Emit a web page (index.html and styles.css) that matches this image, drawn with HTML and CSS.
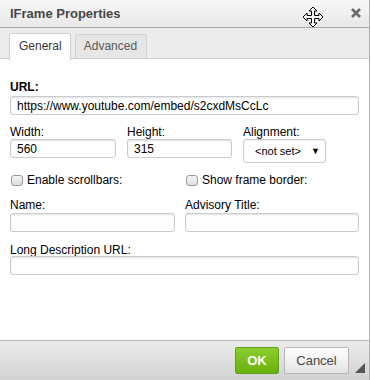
FILE: index.html
```html
<!DOCTYPE html>
<html>
<head>
<meta charset="utf-8">
<link rel="stylesheet" href="styles.css">
</head>
<body>
<div class="dialog">
  <div class="titlebar">
    <span class="title">IFrame Properties</span>
    <svg class="move" width="22" height="22" viewBox="0 0 22 22">
      <path d="M11 1 L15 5 L12.5 5 L12.5 9.5 L17 9.5 L17 7 L21 11 L17 15 L17 12.5 L12.5 12.5 L12.5 17 L15 17 L11 21 L7 17 L9.5 17 L9.5 12.5 L5 12.5 L5 15 L1 11 L5 7 L5 9.5 L9.5 9.5 L9.5 5 L7 5 Z" fill="#fff" stroke="#000" stroke-width="1" stroke-linejoin="miter"/>
    </svg>
    <svg class="close" width="10" height="10" viewBox="0 0 10 10">
      <path d="M1 1 L9 9 M9 1 L1 9" stroke="#6b6b6b" stroke-width="2.6"/>
    </svg>
  </div>
  <div class="tabs">
    <div class="tab active">General</div>
    <div class="tab">Advanced</div>
  </div>
  <div class="content">
    <div class="field">
      <label class="lbl bold">URL:</label>
      <input class="inp url" type="text" value="https://www.youtube.com/embed/s2cxdMsCcLc">
    </div>
    <div class="row3">
      <div class="field">
        <label class="lbl">Width:</label>
        <input class="inp" type="text" value="560">
      </div>
      <div class="field">
        <label class="lbl">Height:</label>
        <input class="inp" type="text" value="315">
      </div>
      <div class="field">
        <label class="lbl">Alignment:</label>
        <div class="select"><span>&lt;not set&gt;</span><span class="arrow">&#9660;</span></div>
      </div>
    </div>
    <div class="row2 checks">
      <label class="chk"><span class="box"></span>Enable scrollbars:</label>
      <label class="chk"><span class="box"></span>Show frame border:</label>
    </div>
    <div class="row2 names">
      <div class="field">
        <label class="lbl">Name:</label>
        <input class="inp gap1" type="text">
      </div>
      <div class="field">
        <label class="lbl">Advisory Title:</label>
        <input class="inp gap1" type="text">
      </div>
    </div>
    <div class="field longdesc">
      <label class="lbl">Long Description URL:</label>
      <input class="inp tight" type="text">
    </div>
  </div>
  <div class="footer">
    <button class="btn ok">OK</button>
    <button class="btn cancel">Cancel</button>
    <span class="grip"></span>
  </div>
</div>
</body>
</html>
```
FILE: styles.css
```css
html, body {
  margin: 0;
  padding: 0;
  background: #fff;
}
body {
  font-family: "Liberation Sans", Arial, sans-serif;
  font-size: 12px;
  color: #000;
}
.dialog {
  width: 370px;
  height: 380px;
  display: flex;
  flex-direction: column;
  border-right: 1px solid #b2b2b2;
  box-sizing: border-box;
  background: #fff;
}
.titlebar {
  flex: none;
  display: flex;
  align-items: center;
  background: linear-gradient(#f7f7f7, #e8e8e8);
  border-bottom: 1px solid #a8a8a8;
  box-sizing: border-box;
  height: 28px;
  padding: 0 8px 0 10px;
  position: relative;
}
.title {
  font-weight: bold;
  font-size: 13px;
  color: #474747;
  flex: 1;
  margin-top: -1px;
}
.move {
  position: absolute;
  left: 302px;
  top: 6px;
}
.close {
  margin-top: -1px;
}
.tabs {
  flex: none;
  height: 31px;
  background: #ececec;
  display: flex;
  align-items: flex-end;
  gap: 4px;
  padding: 0 0 0 9px;
  border-bottom: 1px solid #d1d1d1;
  box-sizing: border-box;
}
.tab {
  font-size: 12px;
  color: #595959;
  border: 1px solid #d1d1d1;
  border-bottom: none;
  border-radius: 3px 3px 0 0;
  background: #e6e6e6;
  padding: 0 9px 0 8px;
  height: 24px;
  line-height: 23px;
  box-sizing: border-box;
}
.tab.active {
  background: #fff;
  color: #383838;
  height: 27px;
  margin-bottom: -2px;
  padding: 0 8px 0 9px;
  line-height: 25px;
}
.content {
  flex: 1;
  padding: 21px 10px 0 10px;
  display: flex;
  flex-direction: column;
}
.field {
  display: flex;
  flex-direction: column;
}
.lbl {
  font-size: 12px;
  color: #000;
  line-height: 14px;
  height: 14px;
}
.lbl.bold {
  font-weight: bold;
}
.inp {
  height: 19px;
  box-sizing: border-box;
  border: 1px solid #c9cccf;
  border-radius: 3px;
  box-shadow: inset 0 1px 2px rgba(0,0,0,0.12);
  font-family: "Liberation Sans", Arial, sans-serif;
  font-size: 12px;
  color: #000;
  padding: 0 6px;
  margin: 0;
  width: 100%;
  outline: none;
}
.inp.url {
  margin-top: 2px;
}
.inp.gap1 {
  margin-top: 1px;
}
.inp.tight {
  margin-top: -1px;
}
.row3 {
  display: grid;
  grid-template-columns: 106px 105px 83px;
  column-gap: 11px;
  margin-top: 10px;
}
.select {
  height: 24px;
  box-sizing: border-box;
  border: 1px solid #c9cccf;
  border-radius: 3px;
  display: flex;
  align-items: center;
  justify-content: space-between;
  padding: 0 5px 0 11px;
  font-size: 11px;
  color: #000;
  box-shadow: inset 0 1px 2px rgba(0,0,0,0.06);
}
.select .arrow {
  font-size: 9px;
}
.row2 {
  display: grid;
  grid-template-columns: 165px 174px;
  column-gap: 10px;
}
.checks {
  margin-top: 10px;
  height: 14px;
}
.names {
  margin-top: 11px;
}
.longdesc {
  margin-top: 11px;
}
.chk {
  display: flex;
  align-items: center;
  gap: 4px;
  font-size: 12px;
  color: #000;
  line-height: 14px;
}
.box {
  width: 12px;
  height: 11px;
  box-sizing: border-box;
  border: 1px solid #9a9a9a;
  border-radius: 3px;
  background: linear-gradient(#f6f6f6, #dcdcdc);
  display: inline-block;
  margin-left: 1px;
}
.footer {
  flex: none;
  height: 40px;
  border-top: 1px solid #b6b6b6;
  background: linear-gradient(#ebebeb, #d2d2d2);
  display: flex;
  align-items: center;
  justify-content: flex-end;
  gap: 5px;
  padding: 0 20px 1px 0;
  box-sizing: border-box;
  position: relative;
}
.btn {
  font-family: "Liberation Sans", Arial, sans-serif;
  height: 27px;
  border-radius: 2px;
  font-size: 13px;
  margin: 0;
  padding: 0;
  box-sizing: border-box;
}
.btn.ok {
  width: 44px;
  background: linear-gradient(#8cce2f, #69b10b);
  border: 1px solid #5ea31a;
  color: #fff;
  font-weight: bold;
}
.btn.cancel {
  width: 65px;
  background: linear-gradient(#fff, #e4e4e4);
  border: 1px solid #b6b6b6;
  color: #474747;
}
.grip {
  position: absolute;
  right: 4px;
  bottom: 7px;
  width: 0;
  height: 0;
  border-left: 10px solid transparent;
  border-bottom: 10px solid #555;
}
```
